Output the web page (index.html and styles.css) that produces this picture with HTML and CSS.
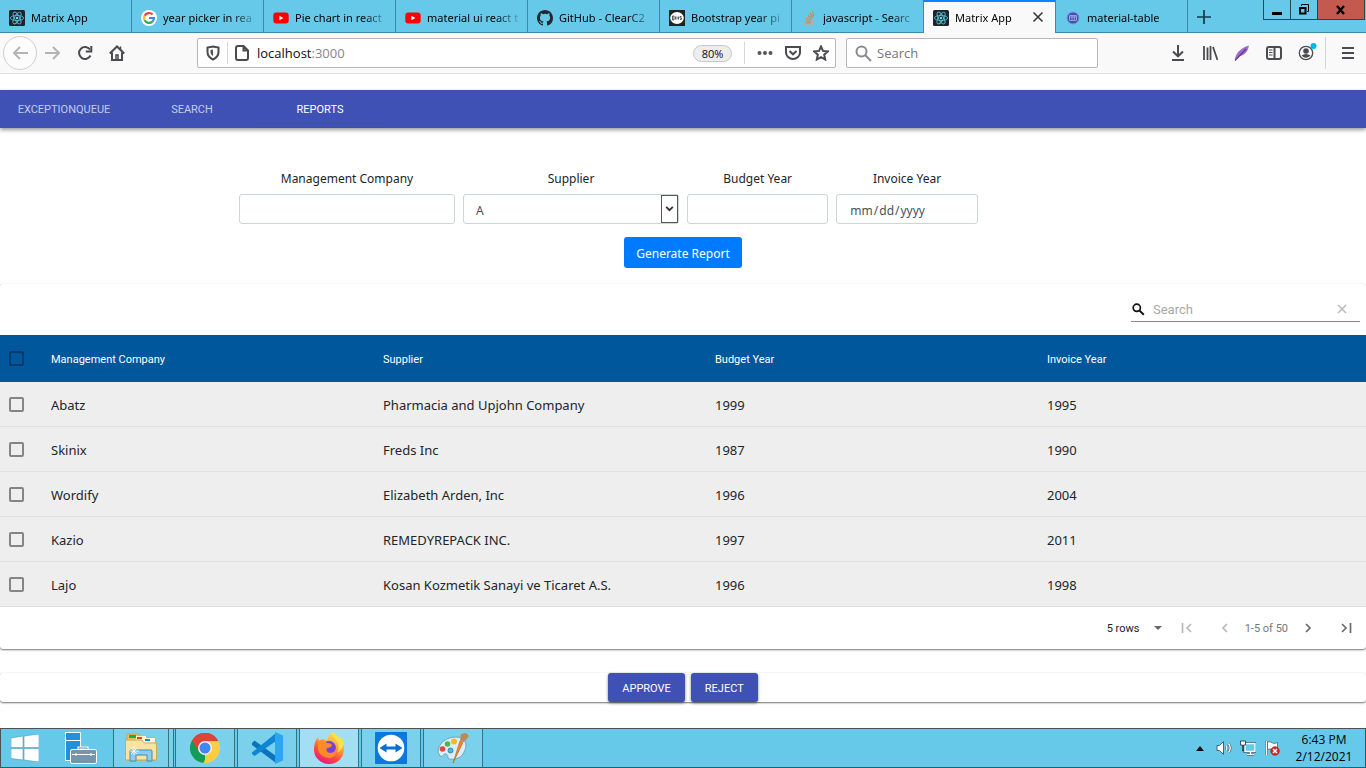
FILE: index.html
```html
<!DOCTYPE html>
<html lang="en">
<head>
<meta charset="utf-8">
<title>Matrix App</title>
<link rel="stylesheet" href="styles.css">
</head>
<body>
<svg class="defs" aria-hidden="true">
  <symbol id="react" viewBox="0 0 16 16">
    <rect width="16" height="16" rx="1.5" fill="#20232a"/>
    <g fill="none" stroke="#53b9d1" stroke-width=".9">
      <ellipse cx="8" cy="8" rx="6.6" ry="2.6"/>
      <ellipse cx="8" cy="8" rx="6.6" ry="2.6" transform="rotate(60 8 8)"/>
      <ellipse cx="8" cy="8" rx="6.6" ry="2.6" transform="rotate(120 8 8)"/>
    </g>
    <circle cx="8" cy="8" r="1.3" fill="#61dafb"/>
  </symbol>
  <symbol id="youtube" viewBox="0 0 16 16">
    <rect x=".3" y="2.5" width="15.4" height="11" rx="3" fill="#f00"/>
    <path d="M6.4 5.7v4.6l4-2.3z" fill="#fff"/>
  </symbol>
</svg>

<header class="tabstrip">
  <nav class="tabs" aria-label="Browser tabs">
    <a class="tab" href="#"><svg class="fav"><use href="#react"/></svg><span>Matrix App</span></a>
    <a class="tab" href="#"><svg class="fav" viewBox="0 0 16 16"><circle cx="8" cy="8" r="8" fill="#fff"/><g fill="none" stroke-width="2.2"><path d="M11.6 4.5A5 5 0 0 0 3.6 5.7" stroke="#ea4335"/><path d="M3.6 5.7a5 5 0 0 0 0 4.6" stroke="#fbbc05"/><path d="M3.6 10.3a5 5 0 0 0 7.8 1.3" stroke="#34a853"/><path d="M11.4 11.6A5 5 0 0 0 13 8H8" stroke="#4285f4"/></g></svg><span>year picker in rea</span></a>
    <a class="tab" href="#"><svg class="fav"><use href="#youtube"/></svg><span>Pie chart in react</span></a>
    <a class="tab" href="#"><svg class="fav"><use href="#youtube"/></svg><span>material ui react t</span></a>
    <a class="tab" href="#"><svg class="fav" viewBox="0 0 16 16"><path fill="#24292e" d="M8 0C3.58 0 0 3.58 0 8c0 3.54 2.29 6.53 5.47 7.59.4.07.55-.17.55-.38 0-.19-.01-.82-.01-1.49-2.01.37-2.53-.49-2.69-.94-.09-.23-.48-.94-.82-1.13-.28-.15-.68-.52-.01-.53.63-.01 1.08.58 1.23.82.72 1.21 1.87.87 2.33.66.07-.52.28-.87.51-1.07-1.78-.2-3.64-.89-3.64-3.95 0-.87.31-1.59.82-2.15-.08-.2-.36-1.02.08-2.12 0 0 .67-.21 2.2.82a7.6 7.6 0 0 1 4 0c1.53-1.04 2.2-.82 2.2-.82.44 1.1.16 1.92.08 2.12.51.56.82 1.27.82 2.15 0 3.07-1.87 3.75-3.65 3.95.29.25.54.73.54 1.48 0 1.07-.01 1.93-.01 2.2 0 .21.15.46.55.38A8 8 0 0 0 16 8c0-4.42-3.58-8-8-8z"/></svg><span>GitHub - ClearC2</span></a>
    <a class="tab" href="#"><svg class="fav" viewBox="0 0 16 16"><rect width="16" height="16" fill="#222"/><ellipse cx="8" cy="8" rx="6.800" ry="6" fill="#fff"/><path d="M3.500 6v4h1.500v-4zM6.500 6.500v3M8 6.500v3M9.500 6.500v3M12.500 6.500h-1.500v1.500h1.500v1.500h-1.500" stroke="#333" stroke-width=".8" fill="none"/></svg><span>Bootstrap year pi</span></a>
    <a class="tab" href="#"><svg class="fav" viewBox="0 0 16 16"><path d="M2.500 10v5h9v-5" stroke="#bcaaa0" stroke-width="1.200" fill="none"/><path d="M4.300 13h5.500M4.400 10.700l5.400.8M5.200 8.200l5 1.700M6.700 5.500l4.300 3M8.900 3.100l3.100 4.200M11.700 1.200l1 5" stroke="#e8812f" stroke-width="1.100"/></svg><span>javascript - Searc</span></a>
    <a class="tab active" href="#" aria-current="page"><svg class="fav"><use href="#react"/></svg><span>Matrix App</span></a>
    <a class="tab" href="#"><svg class="fav" viewBox="0 0 16 16"><circle cx="8" cy="8" r="6" fill="#3f51b5" stroke="#8190dc"/><path d="M4.500 5.500h7v5h-7zM4.500 7h7M7 5.500v5M9.300 5.500v5" stroke="#a9b4ee" fill="none" stroke-width=".8"/></svg><span>material-table</span></a>
  </nav>
  <button class="close-tab" aria-label="Close tab"><svg width="12" height="12" viewBox="0 0 12 12"><path d="M1.500 1.500l9 9M10.500 1.500l-9 9" stroke="#333" stroke-width="1.500"/></svg></button>
  <button class="new-tab" aria-label="New tab"><svg width="14" height="14" viewBox="0 0 14 14"><path d="M7 0v14M0 7h14" stroke="#123b48" stroke-width="1.700"/></svg></button>
  <div class="window-controls">
    <button class="win" aria-label="Minimize"><svg width="12" height="12"><path d="M1 8h10v3H1z"/></svg></button>
    <button class="win" aria-label="Restore"><svg width="12" height="12" fill="none" stroke="#000"><path d="M3.500 2V.5h7v7H9"/><path d="M2 4h5.500v5.500H2z" stroke-width="2"/></svg></button>
    <button class="win close" aria-label="Close"><svg width="12" height="12"><path d="M2 2l7 8M9 2l-7 8" stroke="#000" stroke-width="2.400"/></svg></button>
  </div>
</header>

<div class="toolbar">
  <div class="nav-buttons">
    <button class="tool back" aria-label="Back"><svg width="16" height="16" viewBox="0 0 16 16"><path d="M8 2L2 8l6 6M2 8h14"/></svg></button>
    <button class="tool faint" aria-label="Forward"><svg width="16" height="16" viewBox="0 0 16 16"><path d="M8 2l6 6-6 6M14 8H0"/></svg></button>
    <button class="tool" aria-label="Reload"><svg width="16" height="16" viewBox="0 0 16 16"><path d="M13.500 10.500A6 6 0 1 1 13 4.500"/><path d="M14.300 1v5.500H8.800"/></svg></button>
    <button class="tool" aria-label="Home"><svg width="16" height="16" viewBox="0 0 16 16"><path d="M.8 8.500L8 1.500l7.200 7M3 7.500V15h10V7.500"/><path d="M7 10h2v5H7zM11.500 1.500V5" stroke-width="1.500"/></svg></button>
  </div>
  <div class="urlbar">
    <svg width="14" height="16" viewBox="0 0 14 16"><path d="M7 1.500l5.500 1V7c0 3.500-2 5.700-5.500 7.500C3.500 12.700 1.500 10.500 1.500 7V2.500z"/><path d="M7 4.500v6.500C5.300 10 4.500 8.500 4.500 7V5z" fill="#555" stroke="none"/></svg>
    <i class="rule"></i>
    <svg width="14" height="16" viewBox="0 0 14 16"><path d="M1 3a2 2 0 0 1 2-2h5.500L13 5.500V13a2 2 0 0 1-2 2H3a2 2 0 0 1-2-2zM8.500 1v4.500H13"/></svg>
    <a class="address" href="#">localhost<span>:3000</span></a>
    <button class="zoom-level">80%</button>
    <i class="rule"></i>
    <button class="mini" aria-label="Page actions"><svg width="16" height="16"><g fill="#555" stroke="none"><circle cx="2.500" cy="8" r="2"/><circle cx="8" cy="8" r="2"/><circle cx="13.500" cy="8" r="2"/></g></svg></button>
    <button class="mini" aria-label="Save to Pocket"><svg width="16" height="16"><path d="M1 2h14v5.500a7 6.500 0 0 1-14 0zM4.500 6L8 9.300 11.500 6"/></svg></button>
    <button class="mini" aria-label="Bookmark"><svg width="16" height="16"><path d="M8 1.500l2 4.400 4.800.5-3.600 3.300 1 4.800L8 12.100l-4.200 2.400 1-4.800L1.200 6.400 6 5.900z"/></svg></button>
  </div>
  <label class="browser-search">
    <svg width="17" height="17"><circle cx="6.500" cy="6.500" r="5"/><path d="M10.300 10.300l5.700 5.700"/></svg>
    <input type="text" placeholder="Search" aria-label="Search the web">
  </label>
  <div class="extensions">
    <button class="tool" aria-label="Downloads"><svg width="16" height="16"><path d="M8 0v11M3 6.500L8 11.300l5-4.800M2 15h12"/></svg></button>
    <button class="tool" aria-label="Library"><svg width="16" height="16"><path d="M2 1v14M5.500 2.500V15M8.500 1v14M11 2l4.500 13" stroke-width="1.800"/></svg></button>
    <button class="tool" aria-label="Feather extension"><svg width="16" height="16"><path d="M1 15.500C1 9 6 3 15 .5c-1 5-3 9-10 11z" fill="#a06bc9" stroke="none"/><path d="M1 15.500L12 4" stroke="#62339a" stroke-width="1.200"/></svg></button>
    <button class="tool" aria-label="Sidebar"><svg width="16" height="16"><rect x="1" y="2" width="14" height="12" rx="2"/><path d="M8.500 2v12" /><path d="M3 5h3.500M3 7.500h3.500M3 10h3.500" stroke-width="1"/></svg></button>
    <button class="tool account" aria-label="Account"><svg width="22" height="20"><circle cx="11" cy="10" r="6.700" stroke-width="1.300"/><g stroke="none" fill="#4a4a4f"><circle cx="11" cy="8" r="2.800"/><path d="M6.500 12.500q4.500-3 9 0-4.500 4.500-9 0z"/></g><circle cx="18.500" cy="3" r="3" fill="#00b3f4" stroke="none"/></svg></button>
    <i class="rule tall"></i>
    <button class="tool menu" aria-label="Menu"><svg width="12" height="14"><path d="M0 2h12M0 7h12M0 12h12"/></svg></button>
  </div>
</div>

<main class="app">
  <nav class="appbar">
    <a href="#">EXCEPTIONQUEUE</a>
    <a href="#">SEARCH</a>
    <a class="current" href="#" aria-current="page">REPORTS</a>
  </nav>

  <form class="filters">
    <div class="field wide"><label for="company">Management Company</label><input id="company" type="text"></div>
    <div class="field wide"><label for="supplier">Supplier</label>
      <div class="select"><select id="supplier"><option>A</option><option>B</option></select><svg class="drop" viewBox="0 0 18 28"><path d="M5 11.500L9 15.500l4-4" fill="none" stroke="#333" stroke-width="2.200"/></svg></div>
    </div>
    <div class="field"><label for="budget">Budget Year</label><input id="budget" type="text"></div>
    <div class="field"><label for="invoice">Invoice Year</label><input id="invoice" type="date"></div>
    <button class="generate" type="button">Generate Report</button>
  </form>

  <section class="paper">
    <div class="table-tools">
      <label class="table-search">
        <svg width="13" height="13"><circle cx="4.800" cy="4.800" r="3.600" fill="none" stroke="#111" stroke-width="1.700"/><path d="M7.600 7.600l4.200 4.200" stroke="#111" stroke-width="2"/></svg>
        <input type="text" placeholder="Search" aria-label="Search table">
        <button type="button" aria-label="Clear search"><svg width="10" height="10"><path d="M1 1l8 8M9 1L1 9" stroke="#bbb" stroke-width="1.600"/></svg></button>
      </label>
    </div>
    <table>
      <thead><tr><th class="pick"><input type="checkbox" aria-label="Select all"></th><th>Management Company</th><th>Supplier</th><th>Budget Year</th><th>Invoice Year</th></tr></thead>
      <tbody>
        <tr><td class="pick"><input type="checkbox" aria-label="Select Abatz"></td><td>Abatz</td><td>Pharmacia and Upjohn Company</td><td>1999</td><td>1995</td></tr>
        <tr><td class="pick"><input type="checkbox" aria-label="Select Skinix"></td><td>Skinix</td><td>Freds Inc</td><td>1987</td><td>1990</td></tr>
        <tr><td class="pick"><input type="checkbox" aria-label="Select Wordify"></td><td>Wordify</td><td>Elizabeth Arden, Inc</td><td>1996</td><td>2004</td></tr>
        <tr><td class="pick"><input type="checkbox" aria-label="Select Kazio"></td><td>Kazio</td><td>REMEDYREPACK INC.</td><td>1997</td><td>2011</td></tr>
        <tr><td class="pick"><input type="checkbox" aria-label="Select Lajo"></td><td>Lajo</td><td>Kosan Kozmetik Sanayi ve Ticaret A.S.</td><td>1996</td><td>1998</td></tr>
      </tbody>
    </table>
    <div class="pager">
      <div class="rows"><select aria-label="Rows per page"><option>5 rows</option><option>10 rows</option></select><svg width="8" height="4"><path d="M0 0h8L4 4z" fill="#666"/></svg></div>
      <button class="off" aria-label="First page"><svg width="12" height="10"><path d="M1.500 0v10M10 1L6 5l4 4"/></svg></button>
      <button class="off" aria-label="Previous page"><svg width="12" height="10"><path d="M8 1L4 5l4 4"/></svg></button>
      <span>1-5 of 50</span>
      <button aria-label="Next page"><svg width="12" height="10"><path d="M4 1l4 4-4 4"/></svg></button>
      <button aria-label="Last page"><svg width="12" height="10"><path d="M2 1l4 4-4 4M10.500 0v10"/></svg></button>
    </div>
  </section>

  <section class="paper actions">
    <button>APPROVE</button>
    <button>REJECT</button>
  </section>
</main>

<footer class="taskbar">
  <button class="start" aria-label="Start"><svg width="28" height="28" viewBox="0 0 28 28"><path d="M0 4l12-2v11.500H0zM13 2l15-2v13.500H13zM0 14.500h12V26L0 24.500zM13 14.500h15V28l-15-2z" fill="#fff" stroke="#4a9cb8" stroke-width=".6"/></svg></button>
  <button class="server" aria-label="Server Manager"><svg width="32" height="32" viewBox="0 0 32 32"><path d="M.5.500h15v28H.5z" fill="#2390dc" stroke="#fff"/><path d="M1 8.500h14" stroke="#fff"/><path d="M14 18v-2h8v2" fill="none" stroke="#fff" stroke-width="3"/><path d="M14 18v-2h8v2" fill="none" stroke="#6f899c"/><rect x="5.500" y="17.500" width="26" height="14" rx="1.500" fill="#7795a9" stroke="#fff"/><path d="M7 22.500h23M11 21v3M26 21v3" stroke="#fff"/></svg></button>
  <button class="task explorer" aria-label="File Explorer"><svg width="32" height="30" viewBox="0 0 32 30"><path d="M2 5V1h12v4h16v22H2z" fill="#e9c660" stroke="#c9a64a"/><path d="M4 2h7v3H4z" fill="#13b52c"/><path d="M11 3h10v4H11z" fill="#fff3c1"/><path d="M12 4h5v2h-5z" fill="#d9472b"/><path d="M18 5h12v5H18z" fill="#fff8db"/><path d="M20 6h5v2h-5z" fill="#1389d6"/><path d="M.5 7h16l3 3h12v17H.5z" fill="#f8e3a0" stroke="#cdab50"/><path d="M5 28V18q0-1 1-1h20q1 0 1 1v10h-5v-6H11v6z" fill="#8dcef0" stroke="#3d8cba"/><path d="M9 13v9M5 18h9M6 15l6 6M12 15l-6 6" stroke="#fff" stroke-width=".8"/></svg></button>
  <i class="stack"></i>
  <button class="task" aria-label="Chrome"><svg width="30" height="30" viewBox="0 0 30 30"><path d="M15 15L2 7.500A15 15 0 0 1 28 7.500z" fill="#db4437"/><path d="M15 15L28 7.500A15 15 0 0 1 15 30z" fill="#ffcd40"/><path d="M15 15v15A15 15 0 0 1 2 7.500z" fill="#0f9d58"/><path d="M15 8h13.300v3L21 18l-6 12-1.500-.1L18 20z" fill="#ffcd40"/><path d="M2 7.500L9 19l6-11h13.300l-.3-.5A15 15 0 0 0 2 7.500z" fill="#db4437"/><circle cx="15" cy="15" r="7" fill="#f1f1f1"/><circle cx="15" cy="15" r="5.500" fill="#4285f4"/></svg></button>
  <button class="task" aria-label="Visual Studio Code"><svg width="32" height="32" viewBox="0 0 32 32"><path d="M1 11l2.500-2.500L25 24v7L1 13z" fill="#0a74bd"/><path d="M1 20.500L25 1v8L3.500 24 1 22z" fill="#0e87d3"/><path d="M24 0l8 3.500v25L24 32z" fill="#2ba6f2"/><path d="M18 16l6-5v10z" fill="#79d0ec"/></svg></button>
  <button class="task focus" aria-label="Firefox"><svg width="32" height="32" viewBox="0 0 32 32"><defs><linearGradient id="ff" x1=".8" y1="0" x2=".3" y2="1"><stop offset="0" stop-color="#fff44f"/><stop offset=".4" stop-color="#ffa436"/><stop offset=".7" stop-color="#ff4b3c"/><stop offset="1" stop-color="#e31587"/></linearGradient></defs><path d="M5 5l1 4q2-2 5-2l3 2q1-6 6-9 0 4 4 7l3-1q4 4 4 11a15 14.500 0 0 1-30 1q0-8 4-13z" fill="url(#ff)"/><circle cx="16" cy="16" r="7" fill="#7542d8"/><path d="M5 9q5-2 9 2 4 0 5 2-1 3-5 3-2 4 3 5 5 0 6-5 2 8-6 10-9 0-12-8z" fill="#ff8a2b"/><path d="M20 0q-1 4 3 8 5 6 1 13 8-5 6-13l-3-2z" fill="#ffe14a"/></svg></button>
  <button class="task" aria-label="TeamViewer"><svg width="32" height="32" viewBox="0 0 32 32"><rect width="32" height="32" rx="1" fill="#0a78dc"/><circle cx="16" cy="16" r="13.300" fill="#fff"/><path d="M4.500 16l7-4.500v3h9v-3l7 4.500-7 4.500v-3h-9v3z" fill="#0a70d0"/></svg></button>
  <button class="task" aria-label="Paint"><svg width="32" height="32" viewBox="0 0 32 32"><path d="M1 20C1 11 10 5 19 5c8 0 12 6 9 13-3 8-9 10-16 9-2-1 0-4-3-5s-3 4-6 2z" fill="#dceefa" stroke="#6ca5c8"/><circle cx="5.500" cy="17" r="2.800" fill="#e2473a"/><circle cx="10.500" cy="12" r="2.800" fill="#4db845"/><circle cx="17" cy="9.500" r="3" fill="#f5b82c"/><circle cx="13.500" cy="18.500" r="2.500" fill="#4db4dc" stroke="#3188ad"/><path d="M16 31l7-22 3 1.500z" fill="#ee8a28" stroke="#b55e12" stroke-width=".6"/><path d="M23 9L24 2l5-1 3 3-5 6z" fill="#bd8957"/></svg></button>
  <div class="tray">
    <button aria-label="Show hidden icons"><svg width="8" height="5"><path d="M4 0l4 5H0z" fill="#111"/></svg></button>
    <button aria-label="Volume"><svg width="16" height="16"><path d="M1 5.500h2.500L7.500 1.500v13l-4-4H1z" fill="#fff" stroke="#43656f"/><path d="M10 5.500q2 2.500 0 5M12.500 3.500q3.500 4.500 0 9" fill="none" stroke="#43656f" stroke-width="2.600"/><path d="M10 5.500q2 2.500 0 5M12.500 3.500q3.500 4.500 0 9" fill="none" stroke="#fff" stroke-width="1.300"/></svg></button>
    <button aria-label="Network"><svg width="16" height="16"><path d="M5 3.500h10v8H5zM7 14.500h7M10.500 12v2" stroke="#2f5662" stroke-width="3" fill="none"/><path d="M5 3.500h10v8H5z" fill="#67c9ea" stroke="#fff" stroke-width="1.400"/><path d="M7 14.500h7M10.500 12v2" stroke="#fff" stroke-width="1.400"/><path d="M.5 1h5v4h-2v6H2.500V5h-2z" fill="#fff" stroke="#23444e" stroke-width=".9"/></svg></button>
    <button aria-label="Action Center"><svg width="16" height="16"><path d="M2.500 1v14" stroke="#43656f" stroke-width="3"/><path d="M2.500 1v14" stroke="#fff" stroke-width="1.600"/><path d="M3.500 2q3-1 5 1 2 1 5-.5v7q-4 1-6 0-2-1-4 0z" fill="#fff" stroke="#43656f" stroke-width=".8"/><circle cx="11" cy="11" r="4.300" fill="#d92c25" stroke="#8d1714" stroke-width=".6"/><path d="M9 9l4 4M13 9l-4 4" stroke="#fff" stroke-width="1.500"/></svg></button>
    <div class="clock"><time>6:43 PM</time><time datetime="2021-02-12">2/12/2021</time></div>
  </div>
</footer>
</body>
</html>
```
FILE: styles.css
```css
* { box-sizing: border-box; }
body {
  margin: 0;
  min-height: 100vh;
  display: flex;
  flex-direction: column;
  background: #fff;
  color: #212529;
  font-family: "Noto Sans", "Open Sans", sans-serif;
  font-size: 12px;
}
button, input, select { font: inherit; color: inherit; margin: 0; }
button { border: 0; padding: 0; background: none; display: flex; align-items: center; justify-content: center; flex: none; }
a { color: inherit; text-decoration: none; }
svg { flex: none; display: block; }
input { min-width: 0; }
.defs { width: 0; height: 0; position: absolute; }

/* Browser tabs */
.tabstrip {
  display: flex;
  position: relative;
  height: 33px;
  background: #67c9ea;
  box-shadow: inset 0 -1px #3c8ba3;
  color: #000;
  font-family: "Noto Sans", "Open Sans", sans-serif;
  font-size: 11px;
}
.tabs { display: flex; flex: 0 1 1188px; min-width: 0; }
.tab {
  flex: 1 1 0;
  min-width: 0;
  display: flex;
  align-items: center;
  gap: 6px;
  padding: 2px 3px 0 9px;
  border-right: 1px solid #3c8ba3;
}
.tab span {
  flex: 1;
  white-space: nowrap;
  line-height: 20px;
  -webkit-mask-image: linear-gradient(to right, #000 68px, transparent 96px);
  mask-image: linear-gradient(to right, #000 68px, transparent 96px);
}
.tab.active { background: #f9f9fa; box-shadow: inset 0 2px #0a84ff; }
.fav { width: 16px; height: 16px; }
.close-tab { position: absolute; left: 1031px; top: 10px; width: 14px; height: 14px; }
.new-tab { width: 32px; }
.window-controls { display: flex; margin-left: auto; margin-right: 1px; height: 20px; border: 1px solid #234852; border-top: 0; }
.win { width: 27px; border-right: 1px solid #234852; }
.win.close { width: 46px; border: 0; background: #c4594f; }

/* Navigation toolbar */
.toolbar {
  display: flex;
  align-items: center;
  height: 41px;
  background: #f9f9fa;
  border-bottom: 1px solid #dcdcdd;
  font-family: "Open Sans", sans-serif;
}
.toolbar svg { fill: none; stroke: #4a4a4f; stroke-width: 2; }
.nav-buttons { display: flex; align-items: center; margin-left: 3px; margin-right: 64px; }
.tool { width: 32px; height: 32px; }
.back { width: 34px; height: 34px; border: 1px solid #cfcfd0; border-radius: 50%; background: #fcfcfc; }
.toolbar .back svg, .toolbar .faint svg { stroke: #b4b4b6; }
.rule { width: 1px; height: 22px; background: #d7d7db; flex: none; }
.tall { height: 32px; margin-left: 3px; margin-right: 6px; }
.urlbar, .browser-search {
  display: flex;
  align-items: center;
  height: 30px;
  border: 1px solid #b8b8ba;
  border-radius: 2px;
  background: #fff;
}
.urlbar { flex: 1; gap: 7px; padding: 0 6px 0 8px; font-size: 13px; }
.address { flex: 1; padding-left: 1px; color: #0c0c0d; }
.address span { color: #85858a; }
.zoom-level { width: 39px; height: 17px; margin-right: 5px; border: 1px solid #c8c8ca; border-radius: 9px; background: #ededf0; color: #0c0c0d; font-size: 11px; }
.mini { width: 16px; height: 28px; margin-left: 5px; }
.browser-search { flex: 0 0 252px; margin-left: 10px; margin-right: 64px; padding-left: 8px; gap: 5px; font-size: 13px; }
.browser-search svg { stroke: #8a8a8e; }
.browser-search input { flex: 1; border: 0; outline: 0; background: none; padding: 0; }
.browser-search input::placeholder { color: #75757a; }
.extensions { display: flex; align-items: center; margin-right: 2px; }

/* Application */
.app { flex: 1; padding: 16px 0 24px; }
.appbar {
  display: flex;
  height: 38px;
  background: #3f51b5;
  color: #c5cbe9;
  box-shadow: 0 2px 4px rgba(0, 0, 0, .4);
  font-family: Roboto, sans-serif;
  font-size: 11px;
}
.appbar a { width: 128px; display: flex; align-items: center; justify-content: center; }
.appbar .current { color: #fff; box-shadow: inset 0 -1px #f50057; }

.filters {
  display: grid;
  grid-template-columns: 3fr 3fr 2fr 2fr 2fr;
  max-width: 896px;
  margin: 40px auto 16px;
  row-gap: 13px;
}
.field { padding: 0 4px; text-align: center; }
.field label { display: block; line-height: 22px; margin-bottom: 4px; }
.field input, .field select {
  display: block;
  width: 100%;
  height: 30px;
  padding: 2px 12px 0;
  border: 1px solid #ced4da;
  border-radius: 3px;
  background: #fff;
  color: #495057;
}
.field select { appearance: none; }
.field input::-webkit-calendar-picker-indicator { display: none; }
.select { position: relative; }
.drop { position: absolute; right: 1px; top: 1px; width: 17px; height: 28px; border: 1px solid #555; background: #fff; pointer-events: none; }
.generate {
  grid-column: 1 / -1;
  justify-self: center;
  height: 31px;
  padding: 2px 12px 0;
  border-radius: 3px;
  background: #007bff;
  color: #fff;
}

.paper { border-radius: 3px; box-shadow: 0 1px 2px rgba(0, 0, 0, .55), 0 0 1px rgba(0, 0, 0, .1); }
.table-tools { display: flex; justify-content: flex-end; height: 51px; padding: 13px 6px; }
.table-search {
  display: flex;
  align-items: center;
  width: 229px;
  gap: 8px;
  padding-left: 1px;
  border-bottom: 1px solid #8a8a8a;
  font-family: Roboto, sans-serif;
  font-size: 13px;
}
.table-search input { flex: 1; border: 0; outline: 0; padding: 0; background: none; }
.table-search input::placeholder { color: #a8a8a8; }
.table-search button { width: 36px; }

table { width: 100%; table-layout: fixed; border-collapse: separate; border-spacing: 0; }
th {
  height: 47px;
  padding: 2px 13px 0;
  background: #01579b;
  color: #fff;
  text-align: left;
  font-family: Roboto, sans-serif;
  font-size: 11px;
  font-weight: 400;
}
td { height: 45px; padding: 2px 13px 0; background: #eee; border-bottom: 1px solid #e0e0e0; font-size: 13px; }
.pick { width: 38px; padding: 0 0 0 9px; }
.pick input { appearance: none; display: block; width: 15px; height: 15px; border: 2px solid #858585; border-radius: 2px; }
th.pick input { border-color: #063a64; }

.pager { display: flex; align-items: center; justify-content: flex-end; height: 42px; padding-right: 4px; font-family: Roboto, sans-serif; font-size: 11px; color: #777; }
.pager button { width: 32px; height: 32px; margin-left: 6px; }
.pager span { margin-left: 4px; margin-right: -2px; }
.pager path { fill: none; stroke: #6a6a6a; stroke-width: 1.700; }
.pager .off path { stroke: #b8b8b8; }
.rows { display: flex; align-items: center; gap: 8px; color: #212121; margin-right: 3px; }
.rows select { appearance: none; border: 0; background: none; padding: 0; }
.pager .rows path { fill: #666; stroke: none; }

.actions { display: flex; justify-content: center; gap: 6px; margin-top: 24px; }
.actions button {
  height: 29px;
  padding: 1px 14px 0;
  border-radius: 3px;
  background: #3f51b5;
  color: #fff;
  box-shadow: 0 1px 3px rgba(0, 0, 0, .5);
  font-family: Roboto, sans-serif;
  font-size: 11px;
}

/* Desktop taskbar */
.taskbar { display: flex; height: 40px; padding: 0 1px 0 0; background: #67c9ea; border: 1px solid #4b5254; color: #000; font-family: "Open Sans", sans-serif; font-size: 12px; }
.start { width: 48px; }
.server { width: 64px; }
.task { width: 60px; margin-right: 2px; border: 1px solid #337386; border-top: 0; border-bottom: 0; background: #7bd0ec; }
.explorer { width: 56px; margin-right: 0; }
.stack { width: 5px; margin-right: 1px; border-right: 1px solid #337386; background: #7bd0ec; }
.focus { background: #a3def2; }
.tray { display: flex; align-items: center; margin-left: auto; }
.tray button { width: 24px; height: 24px; }
.clock { display: flex; flex-direction: column; align-items: center; width: 80px; line-height: 17px; }
```
